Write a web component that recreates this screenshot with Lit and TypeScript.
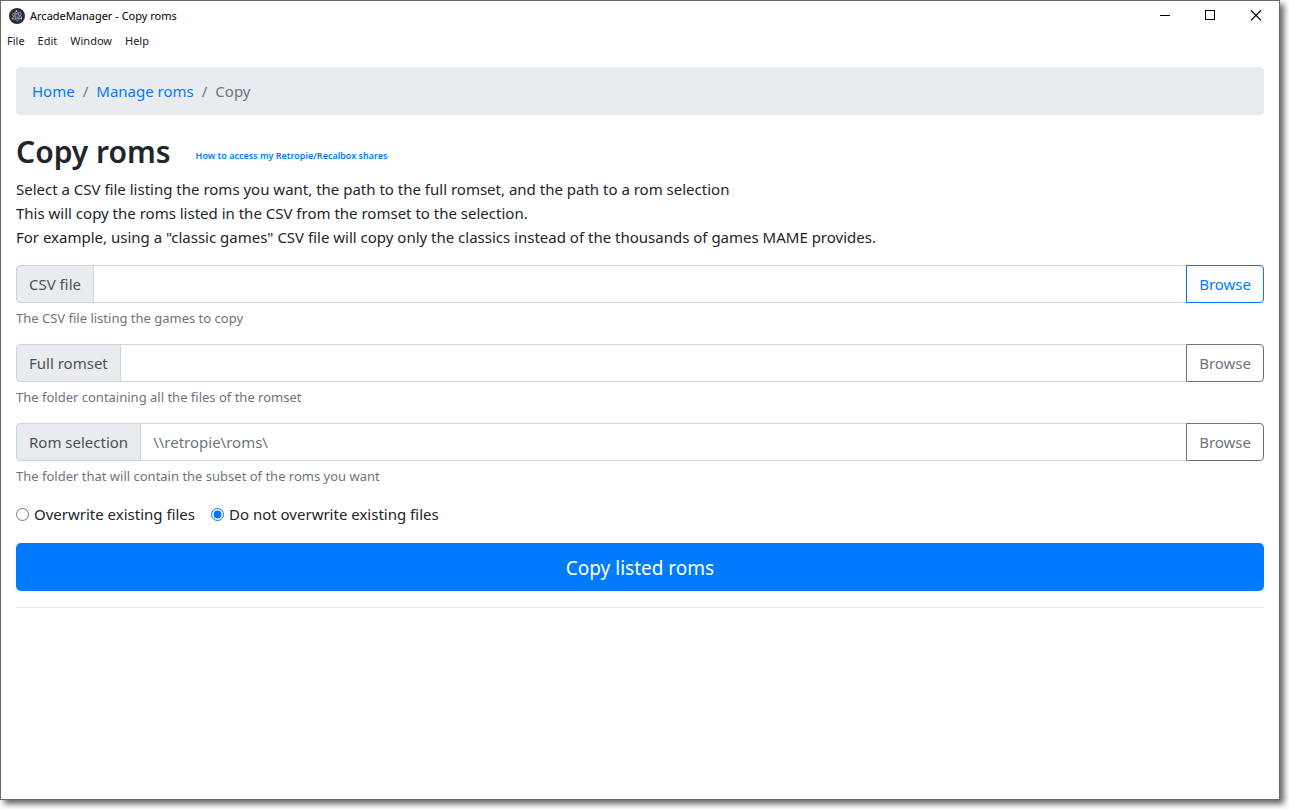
import { LitElement, html, css, svg, nothing } from "lit";
import { customElement, property, state } from "lit/decorators.js";

const FONT = css`"Noto Sans", "Open Sans", sans-serif`;

@customElement("title-bar")
class TitleBar extends LitElement {
  @property() heading = "";

  static styles = css`
    :host {
      display: flex;
      align-items: center;
      height: 29px;
      padding-left: 8px;
      color: #000;
    }
    .logo {
      flex: none;
      width: 16px;
      height: 16px;
      margin-right: 5px;
    }
    .heading {
      flex: 1;
      font: 11px/16px ${FONT};
    }
    .control {
      display: flex;
      align-items: center;
      justify-content: center;
      width: 46px;
      height: 29px;
      padding: 0;
      border: 0;
      background: none;
    }
    .control:hover {
      background: #e5e5e5;
    }
    .control svg {
      width: 12px;
      height: 11px;
      fill: none;
      stroke: #000;
    }
  `;

  render() {
    const controls = [
      { name: "Minimize", shape: svg`<path d="M2 5.5h10" shape-rendering="crispEdges" />` },
      { name: "Maximize", shape: svg`<path d="M1.5.5h9v9h-9z" shape-rendering="crispEdges" />` },
      { name: "Close", shape: svg`<path d="M1 .3l10 10M11 .3l-10 10" stroke-width="1.2" />` },
    ];
    return html`
      <svg class="logo" viewBox="0 0 16 16" aria-hidden="true">
        <circle cx="8" cy="8" r="8" fill="#2b2e3a" />
        <g fill="none" stroke="#a9c8d0" stroke-width=".7" opacity=".8">
          <ellipse cx="8" cy="8" rx="5" ry="2" transform="rotate(25 8 8)" />
          <ellipse cx="8" cy="8" rx="5" ry="2" transform="rotate(85 8 8)" />
          <ellipse cx="8" cy="8" rx="5" ry="2" transform="rotate(145 8 8)" />
        </g>
        <g fill="#b4d3da" opacity=".9">
          <circle cx="8" cy="8" r=".6" />
          <circle cx="3.7" cy="10.6" r=".8" />
          <circle cx="12.3" cy="10.6" r=".8" />
          <circle cx="7.4" cy="3.1" r=".8" />
        </g>
      </svg>
      <span class="heading">${this.heading}</span>
      ${controls.map(
        (c) => html`<button class="control" type="button" aria-label=${c.name}>
          <svg viewBox="0 0 12 11" aria-hidden="true">${c.shape}</svg>
        </button>`,
      )}
    `;
  }
}

@customElement("path-field")
class PathField extends LitElement {
  @property() label = "";
  @property() help = "";
  @property() placeholder = "";
  @property({ type: Boolean }) primary = false;

  static styles = css`
    :host {
      display: block;
      font: 15px/24px ${FONT};
    }
    .group {
      display: flex;
      height: 38px;
    }
    .label,
    .input,
    .browse {
      box-sizing: border-box;
      border: 1px solid #ced4da;
      padding: 6px 12px;
      font: inherit;
    }
    .label {
      flex: none;
      border-radius: 4px 0 0 4px;
      background: #e9ecef;
      color: #495057;
    }
    .input {
      flex: 1;
      min-width: 0;
      margin-left: -1px;
      border-radius: 0;
      background: #fff;
      color: #495057;
      outline: none;
    }
    .input::placeholder {
      color: #6c757d;
      opacity: 1;
    }
    .browse {
      flex: none;
      margin-left: -1px;
      border-color: #6c757d;
      border-radius: 0 4px 4px 0;
      background: #fff;
      color: #6c757d;
    }
    .primary {
      border-color: #007bff;
      color: #007bff;
    }
    .help {
      margin: 5px 0 0;
      color: #6c757d;
      font-size: 13px;
      line-height: 20px;
    }
  `;

  render() {
    return html`
      <div class="group">
        <label class="label" for="path">${this.label}</label>
        <input
          class="input"
          id="path"
          type="text"
          aria-describedby="help"
          placeholder=${this.placeholder || nothing}
        />
        <button class="browse ${this.primary ? "primary" : ""}" type="button">Browse</button>
      </div>
      <p class="help" id="help">${this.help}</p>
    `;
  }
}

@customElement("app-root")
class AppRoot extends LitElement {
  @state() private overwrite = false;

  static styles = css`
    :host {
      display: flex;
      box-sizing: border-box;
      height: 100vh;
      padding: 0 9px 9px 0;
      background: #fff;
      color: #212529;
      font: 15px/24px ${FONT};
    }
    .window {
      flex: 1;
      min-width: 0;
      display: flex;
      flex-direction: column;
      border: 1px solid #6b6b6b;
      background: #fff;
      box-shadow: 4px 4px 6px rgba(0, 0, 0, 0.6);
    }
    .menu {
      display: flex;
      gap: 13px;
      padding: 1px 6px 0;
    }
    .menu-item {
      padding: 0;
      border: 0;
      background: none;
      color: #222;
      font: 11px/20px ${FONT};
    }
    .page {
      display: flex;
      flex-direction: column;
      padding: 16px 15px;
    }
    a {
      color: #007bff;
      text-decoration: none;
    }
    a:hover {
      text-decoration: underline;
    }
    .breadcrumb {
      display: flex;
      margin: 0 0 16px;
      padding: 12px 16px;
      border-radius: 4px;
      background: #e9ecef;
      color: #6c757d;
      list-style: none;
    }
    .crumb + .crumb::before {
      content: "/";
      padding: 0 8px;
    }
    .title {
      display: flex;
      align-items: center;
      gap: 25px;
      margin: 0 0 4px;
      font-size: 30px;
      line-height: 42px;
      font-weight: 600;
    }
    .shares {
      padding-top: 8px;
      font-size: 9px;
      line-height: 12px;
    }
    .intro {
      margin: 0 0 16px;
    }
    .fields {
      display: grid;
      gap: 16px;
    }
    .choices {
      display: flex;
      gap: 16px;
      margin: 16px 0;
      padding: 0;
      border: 0;
    }
    .choice {
      display: flex;
      align-items: center;
      gap: 5px;
      line-height: 25px;
    }
    .radio {
      width: 13px;
      height: 13px;
      margin: 0;
      accent-color: #0075ff;
    }
    .submit {
      padding: 10px 16px 8px;
      border: 0;
      border-radius: 5px;
      background: #007bff;
      color: #fff;
      font: 19px/30px ${FONT};
    }
    .rule {
      width: 100%;
      margin: 16px 0;
      border: 0;
      border-top: 1px solid #e5e5e5;
    }
  `;

  render() {
    return html`
      <div class="window">
        <title-bar heading="ArcadeManager - Copy roms"></title-bar>
        <nav class="menu" aria-label="Application menu">
          ${["File", "Edit", "Window", "Help"].map(
            (name) => html`<button class="menu-item" type="button">${name}</button>`,
          )}
        </nav>
        <main class="page">
          <ol class="breadcrumb">
            <li class="crumb"><a href="#home">Home</a></li>
            <li class="crumb"><a href="#roms">Manage roms</a></li>
            <li class="crumb">Copy</li>
          </ol>
          <h1 class="title">
            Copy roms
            <a class="shares" href="#shares">How to access my Retropie/Recalbox shares</a>
          </h1>
          <p class="intro">
            Select a CSV file listing the roms you want, the path to the full romset, and the path to a rom selection<br />
            This will copy the roms listed in the CSV from the romset to the selection.<br />
            For example, using a "classic games" CSV file will copy only the classics instead of the thousands of games
            MAME provides.
          </p>
          <div class="fields">
            <path-field primary label="CSV file" help="The CSV file listing the games to copy"></path-field>
            <path-field label="Full romset" help="The folder containing all the files of the romset"></path-field>
            <path-field
              label="Rom selection"
              placeholder="\\\\retropie\\roms\\"
              help="The folder that will contain the subset of the roms you want"
            ></path-field>
          </div>
          <fieldset class="choices" aria-label="Existing files">
            <label class="choice">
              <input
                class="radio"
                type="radio"
                name="overwrite"
                .checked=${this.overwrite}
                @change=${() => (this.overwrite = true)}
              />
              Overwrite existing files
            </label>
            <label class="choice">
              <input
                class="radio"
                type="radio"
                name="overwrite"
                .checked=${!this.overwrite}
                @change=${() => (this.overwrite = false)}
              />
              Do not overwrite existing files
            </label>
          </fieldset>
          <button class="submit" type="button">Copy listed roms</button>
          <hr class="rule" />
        </main>
      </div>
    `;
  }
}
